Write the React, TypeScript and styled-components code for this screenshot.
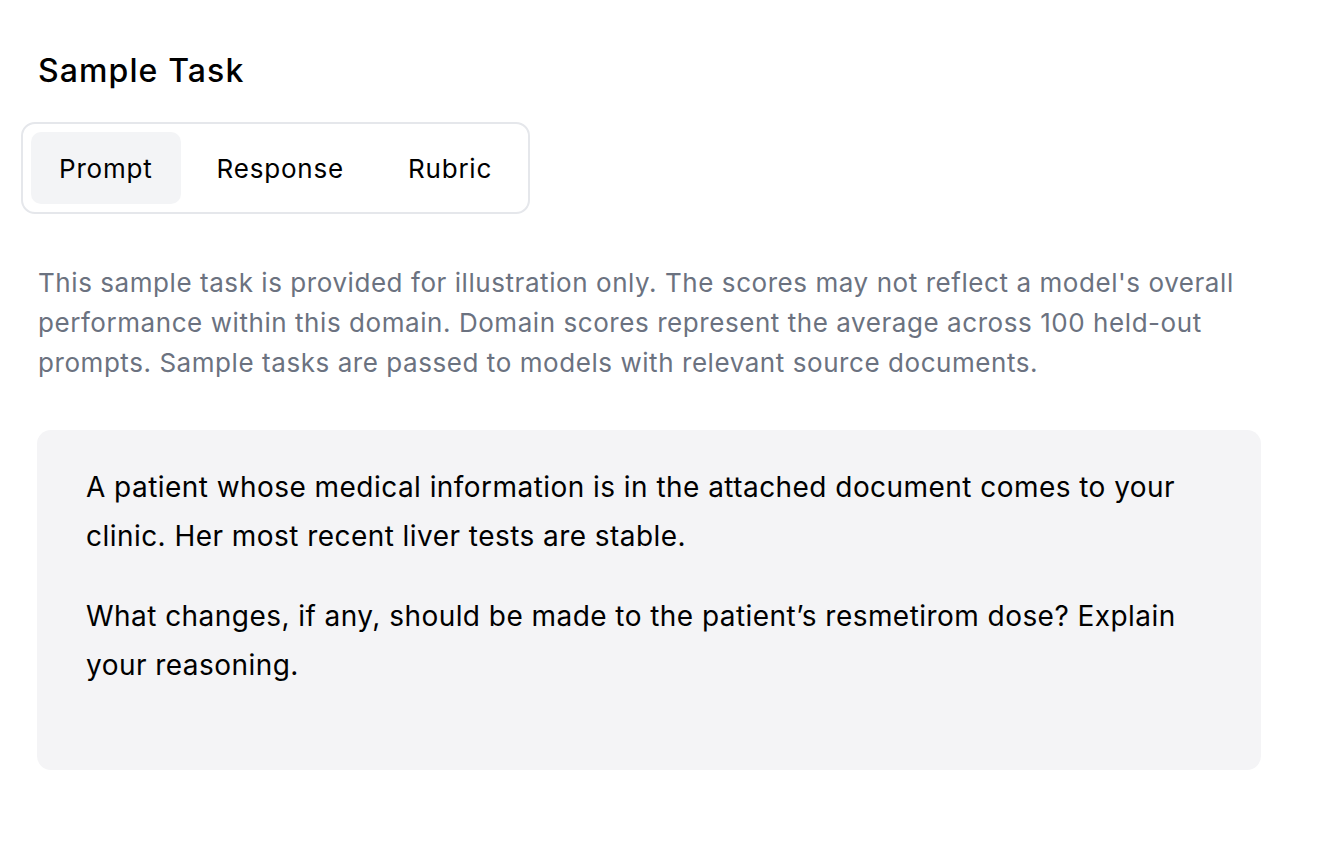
import { useState } from "react";
import styled, { createGlobalStyle } from "styled-components";

const tabs = ["Prompt", "Response", "Rubric"];

const App = () => {
  const [active, setActive] = useState("Prompt");

  return (
    <>
      <GlobalStyle />
      <Page>
        <Title>Sample Task</Title>

        <TabList>
          {tabs.map((t) => (
            <Tab key={t} $active={t === active} onClick={() => setActive(t)}>
              {t}
            </Tab>
          ))}
        </TabList>

        <Note>
          This sample task is provided for illustration only. The scores may not
          reflect a model's overall performance within this domain. Domain
          scores represent the average across 100 held-out prompts. Sample tasks
          are passed to models with relevant source documents.
        </Note>

        <PromptBox>
          <Paragraph>
            A patient whose medical information is in the attached document
            comes to your clinic. Her most recent liver tests are stable.
          </Paragraph>
          <Paragraph>
            What changes, if any, should be made to the patient’s resmetirom
            dose? Explain your reasoning.
          </Paragraph>
        </PromptBox>
      </Page>
    </>
  );
};

const GlobalStyle = createGlobalStyle`
  body {
    margin: 0;
    background: #ffffff;
    font-family: Inter, "Noto Sans", sans-serif;
    color: #000000;
  }
`;

const Page = styled.div`
  width: 1224px;
  padding: 49px 0 0 37px;
  display: flex;
  flex-direction: column;
  align-items: flex-start;
`;

const Title = styled.h2`
  margin: 0 0 29px 1px;
  font-size: 32px;
  line-height: 44px;
  font-weight: 500;
  letter-spacing: 1.1px;
`;

const TabList = styled.div`
  margin-left: -16px;
  display: flex;
  gap: 8px;
  padding: 8px;
  border: 2px solid #e5e7eb;
  border-radius: 14px;
`;

const Tab = styled.button<{ $active: boolean }>`
  height: 72px;
  padding: 0 28px;
  border: none;
  border-radius: 10px;
  background: ${(p) => (p.$active ? "#f3f4f6" : "transparent")};
  font-family: inherit;
  font-size: 26px;
  font-weight: 400;
  letter-spacing: 0.8px;
  color: #000000;
  cursor: pointer;
`;

const Note = styled.p`
  margin: 49px 0 47px 1px;
  width: 1215px;
  font-size: 26px;
  line-height: 40px;
  letter-spacing: 0.56px;
  color: #6b7280;
`;

const PromptBox = styled.div`
  box-sizing: border-box;
  width: 1224px;
  padding: 33px 49px 49px;
  background: #f4f4f6;
  border-radius: 14px;
`;

const Paragraph = styled.p`
  margin: 0 0 31px;
  font-size: 28px;
  line-height: 49px;
  letter-spacing: 0.45px;
`;

export default App;
